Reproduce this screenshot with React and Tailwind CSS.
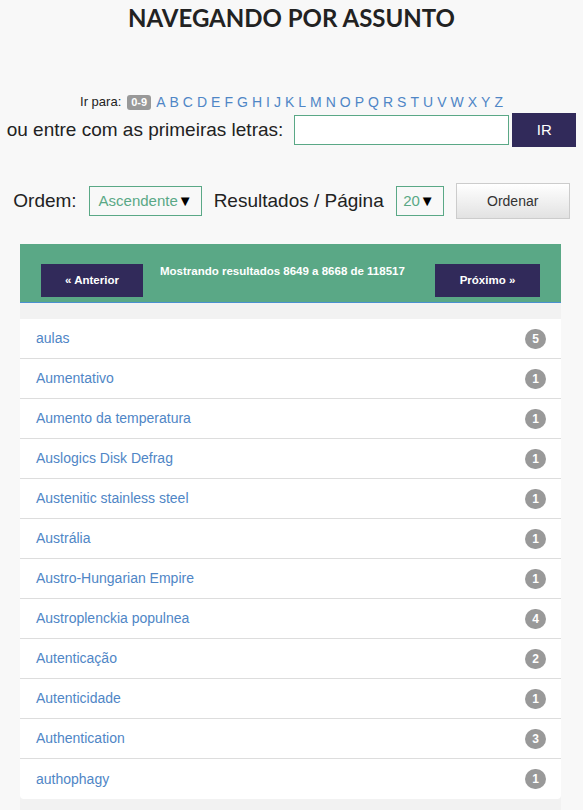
import React from 'react';

const letters = 'ABCDEFGHIJKLMNOPQRSTUVWXYZ'.split('');

const items = [
  ['aulas', 5],
  ['Aumentativo', 1],
  ['Aumento da temperatura', 1],
  ['Auslogics Disk Defrag', 1],
  ['Austenitic stainless steel', 1],
  ['Austrália', 1],
  ['Austro-Hungarian Empire', 1],
  ['Austroplenckia populnea', 4],
  ['Autenticação', 2],
  ['Autenticidade', 1],
  ['Authentication', 3],
  ['authophagy', 1],
];

function Select({ value, width }) {
  return (
    <div className={`flex h-[30px] ${width} items-center justify-end border border-[#5aa886] pr-[8px]`}>
      <span className="text-[15px] text-[#5aa886]">{value}</span>
      <span className="text-[15px] text-black">▼</span>
    </div>
  );
}

export default function App() {
  return (
    <div className="min-h-[810px] bg-[#f8f8f8] font-['Liberation_Sans',Arial,sans-serif] text-[#222]">
      <h1 className="text-center font-['Lato',sans-serif] text-[24px] font-bold leading-[36px] text-[#222]">
        NAVEGANDO POR ASSUNTO
      </h1>

      <div className="mt-[56px] flex h-[20px] items-center justify-center text-[13px]">
        <span className="mr-[6px]">Ir para:</span>
        <span className="mr-[5px] rounded-[3px] bg-[#999] px-[4px] text-[11px] font-bold leading-[15px] text-white">0-9</span>
        {letters.map((l, i) => (
          <a key={l} className={`text-[14px] text-[#4f86c6] ${i < letters.length - 1 ? 'mr-[4px]' : ''}`}>{l}</a>
        ))}
      </div>

      <div className="mt-[1px] flex items-center justify-center">
        <span className="text-[19px] text-[#222]">ou entre com as primeiras letras:</span>
        <div className="ml-[11px] h-[30px] w-[215px] border border-[#5aa886] bg-white"></div>
        <button className="ml-[3px] h-[34px] w-[64px] bg-[#312a5a] text-[15px] text-white">IR</button>
      </div>

      <div className="mt-[36px] flex h-[36px] items-center justify-center gap-[12px]">
        <span className="text-[19px]">Ordem:</span>
        <Select value="Ascendente" width="w-[113px]" />
        <span className="text-[19px]">Resultados / Página</span>
        <Select value="20" width="w-[48px]" />
        <button className="h-[36px] w-[114px] border border-[#ccc] bg-gradient-to-b from-white to-[#e2e2e2] text-[14px] text-[#333]">
          Ordenar
        </button>
      </div>

      <div className="ml-[20px] mt-[25px] w-[541px] bg-[#f2f2f2] pb-[20px]">
        <div className="flex h-[59px] items-start border-b border-[#4a90d0] bg-[#5aa886] px-[21px] pt-[20px]">
          <button className="flex h-[33px] w-[102px] items-center justify-center bg-[#312a5a] text-[11.5px] font-bold text-white">
            « Anterior
          </button>
          <span className="ml-[17px] text-[11.5px] font-bold leading-[14px] text-white">
            Mostrando resultados 8649 a 8668 de 118517
          </span>
          <button className="ml-auto flex h-[33px] w-[105px] items-center justify-center bg-[#312a5a] text-[11.5px] font-bold text-white">
            Próximo »
          </button>
        </div>

        <ul className="mt-[16px] rounded-b-[4px] bg-white">
          {items.map(([name, count], i) => (
            <li
              key={name}
              className={`flex h-[40px] items-center justify-between pl-[16px] pr-[15px] ${i < items.length - 1 ? 'border-b border-[#ddd]' : 'h-[39px]'}`}
            >
              <a className="text-[14px] text-[#4f86c6]">{name}</a>
              <span className="flex h-[20px] min-w-[21px] items-center justify-center rounded-full bg-[#999] text-[12px] font-bold text-white">
                {count}
              </span>
            </li>
          ))}
        </ul>
      </div>
    </div>
  );
}
